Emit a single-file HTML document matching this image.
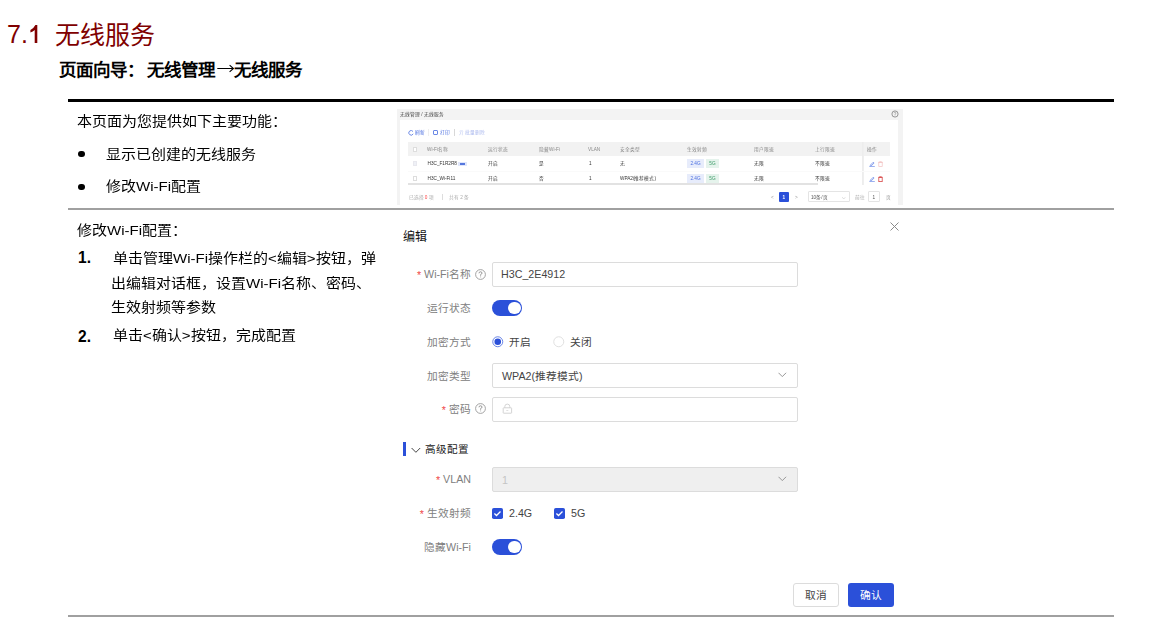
<!DOCTYPE html>
<html lang="zh-CN"><head><meta charset="utf-8">
<style>
*{margin:0;padding:0;box-sizing:border-box}
html,body{width:1151px;height:622px;overflow:hidden;background:#fff}
body{position:relative;font-family:"Liberation Sans",sans-serif;color:#000}
.a{position:absolute;white-space:nowrap}
.title{left:8px;top:18px;font-size:25px;line-height:32px;color:#800000}
.sub{left:59px;top:58px;font-size:17.5px;line-height:24px;font-weight:bold}
.hr{position:absolute;left:68px;width:1046px}
.body{font-size:15px;line-height:20px;color:#000;transform:scaleY(0.88);transform-origin:0 85%}
.lab{font-size:10.7px;line-height:16px;color:#808080;text-align:right}
.req{color:#f04a4a;position:relative;top:0.8px}
.inp{position:absolute;left:492px;width:306px;height:25px;border:1px solid #dcdcdc;border-radius:2px;background:#fff}
.itx{font-size:10.7px;line-height:16px;color:#444}
.tog{position:absolute;left:492px;width:30.4px;height:16px;border-radius:8px;background:#2b50d9}
.tog:after{content:"";position:absolute;right:1.6px;top:1.8px;width:12.4px;height:12.4px;border-radius:50%;background:#fff}
.t5{font-size:4.7px;line-height:7px}
.h{color:#888}
.r{color:#333}
.tag{font-size:4.7px;line-height:9px;height:9px;padding:0 3px;text-align:center}
.tag.b{width:17px;background:#e7ecfb;color:#4a6ee0}
.tag.g{width:13px;background:#e5f3ec;color:#3a9a66}
</style></head><body>
<div class="a title" style="left:7px">7.</div>
<svg class="a" style="left:0;top:0" width="60" height="50" viewBox="0 0 60 50"><path d="M37.3 24.9H35.4Q34.2 27.6 30.4 29.9V32.4Q32.9 31.5 34.7 29.9V42.9H37.3Z" fill="#800000"/></svg>
<div class="a title" style="left:55px;top:18.8px">无线服务</div>
<div class="a sub">页面向导：</div>
<div class="a sub" style="left:147px">无线管理</div>
<svg class="a" style="left:217px;top:64px" width="17" height="9" viewBox="0 0 17 9"><path d="M0.3 4.5H16.3M12.6 1.2L16.4 4.5L12.6 7.8" stroke="#000" stroke-width="1.1" fill="none"/></svg>
<div class="a sub" style="left:234.3px">无线服务</div>

<div class="hr" style="top:99px;height:3px;background:#000"></div>
<div class="hr" style="top:208px;height:2px;background:#a0a0a0"></div>
<div class="hr" style="top:615px;height:2px;background:#a0a0a0"></div>


<div style="position:absolute;left:0;top:0;width:1151px;height:622px;filter:blur(0.4px)">
<!-- embedded screenshot -->
<div class="a" style="left:397px;top:109px;width:506px;height:95.5px;background:#f3f3f3"></div>
<div class="a" style="left:400px;top:120px;width:498px;height:86px;background:#fff"></div>
<div class="a t5" style="left:400px;top:111px;color:#444">无线管理 / 无线服务</div>
<svg class="a" style="left:891px;top:109.5px" width="8" height="8" viewBox="0 0 8 8"><circle cx="4" cy="4" r="3.1" fill="none" stroke="#666" stroke-width="0.65"/><path d="M3 3.2Q3 2.2 4 2.2Q5 2.2 5 3.1Q5 3.8 4 4.2V5M4 5.6V6.2" stroke="#888" stroke-width="0.55" fill="none"/></svg>
<svg class="a" style="left:408px;top:130px" width="6" height="6" viewBox="0 0 6 6"><path d="M5 1.5A2.3 2.3 0 1 0 5.2 3.8" stroke="#4a6ee0" stroke-width="0.8" fill="none"/></svg>
<div class="a t5" style="left:415px;top:129px;color:#4a6ee0">刷新</div>
<div class="a" style="left:428px;top:129px;width:1px;height:7px;background:#eeeeee"></div>
<div class="a" style="left:433px;top:130px;width:5px;height:5px;border:0.8px solid #6a88e6;border-radius:1px"></div>
<div class="a t5" style="left:440px;top:129px;color:#4a6ee0">打印</div>
<div class="a" style="left:454px;top:129px;width:1px;height:7px;background:#d8d8d8"></div>
<div class="a t5" style="left:459px;top:129px;color:#aab8ee">亓 批量删除</div>
<div class="a" style="left:408px;top:142px;width:482px;height:14px;background:#f2f2f2"></div>
<div class="a" style="left:412.5px;top:147px;width:4.5px;height:5px;background:#fff;border:0.6px solid #ddd"></div>
<div class="a t5 h" style="left:427px;top:146px">Wi-Fi名称</div>
<div class="a t5 h" style="left:488px;top:146px">运行状态</div>
<div class="a t5 h" style="left:539px;top:146px">隐藏Wi-Fi</div>
<div class="a t5 h" style="left:588px;top:146px">VLAN</div>
<div class="a t5 h" style="left:620px;top:146px">安全类型</div>
<div class="a t5 h" style="left:687px;top:146px">生效射频</div>
<div class="a t5 h" style="left:754px;top:146px">用户限速</div>
<div class="a t5 h" style="left:815px;top:146px">上行限速</div>
<div class="a t5 h" style="left:867px;top:146px">操作</div>
<div class="a" style="left:861.5px;top:142px;width:2.5px;height:43px;background:linear-gradient(90deg,#f4f4f4,#e6e6e6,#f8f8f8)"></div>
<div class="a" style="left:408px;top:170.5px;width:482px;height:0.6px;background:#fafafa"></div>

<div class="a" style="left:412.5px;top:161px;width:4.5px;height:5px;background:#eef0f6;border:0.6px solid #e8e8ee"></div>
<div class="a t5 r" style="left:427.5px;top:160px">H3C_F1R2R8</div>
<div class="a" style="left:458px;top:161.5px;width:8.5px;height:4px;background:#dfe6fb"></div>
<div class="a" style="left:459.5px;top:162.5px;width:5.5px;height:2px;background:#5577dd"></div>
<div class="a t5 r" style="left:487.5px;top:160px">开启</div>
<div class="a t5 r" style="left:538.5px;top:160px">是</div>
<div class="a t5 r" style="left:589px;top:160px">1</div>
<div class="a t5 r" style="left:620px;top:160px">无</div>
<div class="a tag b" style="left:687px;top:159px">2.4G</div>
<div class="a tag g" style="left:706px;top:159px">5G</div>
<div class="a t5 r" style="left:754px;top:160px">无限</div>
<div class="a t5 r" style="left:815px;top:160px">不限速</div>
<svg class="a" style="left:868.5px;top:161px" width="6" height="6" viewBox="0 0 6 6"><path d="M1.2 4.3L4.3 1.2L5.1 2L2 5.1Z" fill="none" stroke="#5a7ce4" stroke-width="0.7"/><path d="M0.3 5.5H5.8" stroke="#5a7ce4" stroke-width="0.6"/></svg>
<svg class="a" style="left:877.5px;top:161px" width="5" height="6" viewBox="0 0 5 6"><path d="M0.2 1.3H4.8M1.7 1.3V0.4H3.3V1.3" fill="none" stroke="#f2c0c0" stroke-width="0.6"/><rect x="0.8" y="1.6" width="3.4" height="4" fill="none" stroke="#f2c0c0" stroke-width="0.7"/></svg>

<div class="a" style="left:412.5px;top:175.5px;width:4.5px;height:5px;background:#fff;border:0.6px solid #ddd"></div>
<div class="a t5 r" style="left:427.5px;top:175px">H3C_Wi-Fi11</div>
<div class="a t5 r" style="left:487.5px;top:175px">开启</div>
<div class="a t5 r" style="left:538.5px;top:175px">否</div>
<div class="a t5 r" style="left:589px;top:175px">1</div>
<div class="a t5 r" style="left:620px;top:175px">WPA2(推荐模式)</div>
<div class="a tag b" style="left:687px;top:174px">2.4G</div>
<div class="a tag g" style="left:706px;top:174px">5G</div>
<div class="a t5 r" style="left:754px;top:175px">无限</div>
<div class="a t5 r" style="left:815px;top:175px">不限速</div>
<svg class="a" style="left:868.5px;top:176px" width="6" height="6" viewBox="0 0 6 6"><path d="M1.2 4.3L4.3 1.2L5.1 2L2 5.1Z" fill="none" stroke="#5a7ce4" stroke-width="0.7"/><path d="M0.3 5.5H5.8" stroke="#5a7ce4" stroke-width="0.6"/></svg>
<svg class="a" style="left:877.5px;top:176px" width="5" height="6" viewBox="0 0 5 6"><path d="M0.2 1.3H4.8M1.7 1.3V0.4H3.3V1.3" fill="none" stroke="#d84848" stroke-width="0.6"/><rect x="0.8" y="1.6" width="3.4" height="4" fill="none" stroke="#d84848" stroke-width="0.8"/></svg>
<div class="a" style="left:408px;top:183px;width:410px;height:2px;background:#e2e2e2"></div>

<div class="a t5" style="left:408.5px;top:194px;color:#aaa">已选择 <span style="color:#f44">0</span> 项</div>
<div class="a" style="left:442px;top:194px;width:0.7px;height:6px;background:#ddd"></div>
<div class="a t5" style="left:449px;top:194px;color:#aaa">共有 2 条</div>
<div class="a t5" style="left:771px;top:194px;color:#999">&lt;</div>
<div class="a" style="left:779px;top:191.5px;width:10px;height:10px;background:#2b50d9;border-radius:1px"></div>
<div class="a t5" style="left:782.5px;top:194px;color:#fff;font-weight:bold">1</div>
<div class="a t5" style="left:795px;top:194px;color:#999">&gt;</div>
<div class="a" style="left:807.5px;top:191px;width:42px;height:11px;border:0.7px solid #e4e4e4;border-radius:1px;background:#fff"></div>
<div class="a t5" style="left:811px;top:194px;color:#555">10条/页</div>
<div class="a t5" style="left:842px;top:194px;color:#999">⌵</div>
<div class="a t5" style="left:855px;top:194px;color:#aaa">前往</div>
<div class="a" style="left:867.5px;top:191px;width:12.5px;height:11px;border:0.7px solid #e4e4e4;border-radius:1px;background:#fff"></div>
<div class="a t5" style="left:872.5px;top:194px;color:#555">1</div>
<div class="a t5" style="left:885.5px;top:194px;color:#999">页</div>

</div>
<!-- left column -->
<div class="a body" style="left:77px;top:111px">本页面为您提供如下主要功能：</div>
<div class="a" style="left:78px;top:150.8px;width:6.5px;height:6.5px;border-radius:50%;background:#000"></div>
<div class="a body" style="left:106px;top:143.5px">显示已创建的无线服务</div>
<div class="a" style="left:78px;top:183.6px;width:6.5px;height:6.5px;border-radius:50%;background:#000"></div>
<div class="a body" style="left:106px;top:176.3px">修改Wi-Fi配置</div>

<div class="a body" style="left:77px;top:220px">修改Wi-Fi配置：</div>
<div class="a body" style="left:78px;top:248px;font-weight:bold;font-size:15.6px;transform:none">1.</div>
<div class="a body" style="left:113px;top:247.5px">单击管理Wi-Fi操作栏的&lt;编辑&gt;按钮，弹</div>
<div class="a body" style="left:111px;top:272.5px">出编辑对话框，设置Wi-Fi名称、密码、</div>
<div class="a body" style="left:111px;top:297px">生效射频等参数</div>
<div class="a body" style="left:78px;top:327px;font-weight:bold;font-size:15.6px;transform:none">2.</div>
<div class="a body" style="left:113px;top:325px">单击&lt;确认&gt;按钮，完成配置</div>

<!-- dialog -->
<div class="a" style="left:403px;top:229px;font-size:12px;line-height:16px;font-weight:500;color:#111">编辑</div>
<svg class="a" style="left:890px;top:222px" width="9" height="9" viewBox="0 0 9 9"><path d="M0.5 0.5L8.5 8.5M8.5 0.5L0.5 8.5" stroke="#8a8a8a" stroke-width="1"/></svg>

<div class="a lab" style="right:680px;top:266px"><span class="req">* </span>Wi-Fi名称</div>
<div class="inp" style="top:262px"></div>
<div class="a itx" style="left:501px;top:266px">H3C_2E4912</div>

<div class="a lab" style="right:680px;top:300px">运行状态</div>
<div class="tog" style="top:300px"></div>

<div class="a lab" style="right:680px;top:334px">加密方式</div>
<div class="a itx" style="left:509px;top:334px">开启</div>
<div class="a itx" style="left:570px;top:334px">关闭</div>

<div class="a lab" style="right:680px;top:368px">加密类型</div>
<div class="inp" style="top:363px"></div>
<div class="a itx" style="left:502px;top:368px">WPA2(推荐模式)</div>

<div class="a lab" style="right:680px;top:401px"><span class="req">* </span>密码</div>
<div class="inp" style="top:397px"></div>

<div class="a" style="left:403px;top:442px;width:3px;height:14px;background:#2b50d9"></div>
<div class="a" style="left:425.3px;top:441.2px;font-size:10.6px;line-height:16px;font-weight:500;color:#222">高级配置</div>

<div class="a lab" style="right:680px;top:471px"><span class="req">* </span>VLAN</div>
<div class="inp" style="top:467px;background:#efefef"></div>
<div class="a itx" style="left:502px;top:471.5px;color:#c4c4c4">1</div>

<div class="a lab" style="right:680px;top:505px"><span class="req">* </span>生效射频</div>
<div class="a itx" style="left:509px;top:505px">2.4G</div>
<div class="a itx" style="left:571px;top:505px">5G</div>

<div class="a lab" style="right:680px;top:539px">隐藏Wi-Fi</div>
<div class="tog" style="top:539px"></div>

<div class="a" style="left:793px;top:583px;width:46px;height:24px;border:1px solid #dcdcdc;border-radius:3px"></div>
<div class="a itx" style="left:805px;top:587px">取消</div>
<div class="a" style="left:848px;top:583px;width:46px;height:24px;background:#2b50d9;border-radius:3px"></div>
<div class="a itx" style="left:860px;top:587px;color:#fff;font-weight:500">确认</div>

<!-- dialog icons -->
<svg class="a" style="left:475px;top:269px" width="11" height="11" viewBox="0 0 11 11"><circle cx="5.5" cy="5.5" r="4.9" fill="none" stroke="#9a9a9a" stroke-width="0.9"/><path d="M4 4.3Q4 2.8 5.5 2.8Q7 2.8 7 4.1Q7 5 5.6 5.6V6.7M5.6 7.6V8.3" stroke="#8a8a8a" stroke-width="0.9" fill="none"/></svg>
<svg class="a" style="left:475px;top:403px" width="11" height="11" viewBox="0 0 11 11"><circle cx="5.5" cy="5.5" r="4.9" fill="none" stroke="#9a9a9a" stroke-width="0.9"/><path d="M4 4.3Q4 2.8 5.5 2.8Q7 2.8 7 4.1Q7 5 5.6 5.6V6.7M5.6 7.6V8.3" stroke="#8a8a8a" stroke-width="0.9" fill="none"/></svg>
<svg class="a" style="left:491.5px;top:336px" width="12" height="12" viewBox="0 0 12 12"><circle cx="5.75" cy="5.75" r="5" fill="#fff" stroke="#5a78e2" stroke-width="0.9"/><circle cx="5.75" cy="5.75" r="3.3" fill="#2b50d9"/></svg>
<svg class="a" style="left:552.5px;top:336px" width="12" height="12" viewBox="0 0 12 12"><circle cx="5.75" cy="5.75" r="5" fill="#fff" stroke="#dcdcdc" stroke-width="0.9"/></svg>
<svg class="a" style="left:778px;top:372px" width="9" height="6" viewBox="0 0 9 6"><path d="M0.5 0.8L4.3 4.6L8.1 0.8" stroke="#8c8c8c" stroke-width="0.9" fill="none"/></svg>
<svg class="a" style="left:778px;top:476px" width="9" height="6" viewBox="0 0 9 6"><path d="M0.5 0.8L4.3 4.6L8.1 0.8" stroke="#8c8c8c" stroke-width="0.9" fill="none"/></svg>
<svg class="a" style="left:502px;top:403px" width="11" height="11" viewBox="0 0 11 11"><path d="M2.8 4.8V3.6Q2.8 1.1 5.3 1.1Q7.8 1.1 7.8 3.6V4.8" stroke="#cfcfcf" stroke-width="0.9" fill="none"/><rect x="1.2" y="4.8" width="8.4" height="5.4" rx="0.5" fill="none" stroke="#cfcfcf" stroke-width="0.9"/><path d="M4.3 7.5H6.3" stroke="#d8d8d8" stroke-width="0.8"/></svg>
<svg class="a" style="left:410.5px;top:446.5px" width="10" height="7" viewBox="0 0 10 7"><path d="M0.6 1L4.9 5.3L9.2 1" stroke="#444" stroke-width="1" fill="none"/></svg>
<svg class="a" style="left:491.5px;top:508px" width="11" height="11" viewBox="0 0 11 11"><rect x="0" y="0" width="11" height="11" rx="1.8" fill="#2b50d9"/><path d="M2.4 5.5L4.5 7.5L8.5 3.5" stroke="#fff" stroke-width="1.3" fill="none"/></svg>
<svg class="a" style="left:554px;top:508px" width="11" height="11" viewBox="0 0 11 11"><rect x="0" y="0" width="11" height="11" rx="1.8" fill="#2b50d9"/><path d="M2.4 5.5L4.5 7.5L8.5 3.5" stroke="#fff" stroke-width="1.3" fill="none"/></svg>
</body></html>
